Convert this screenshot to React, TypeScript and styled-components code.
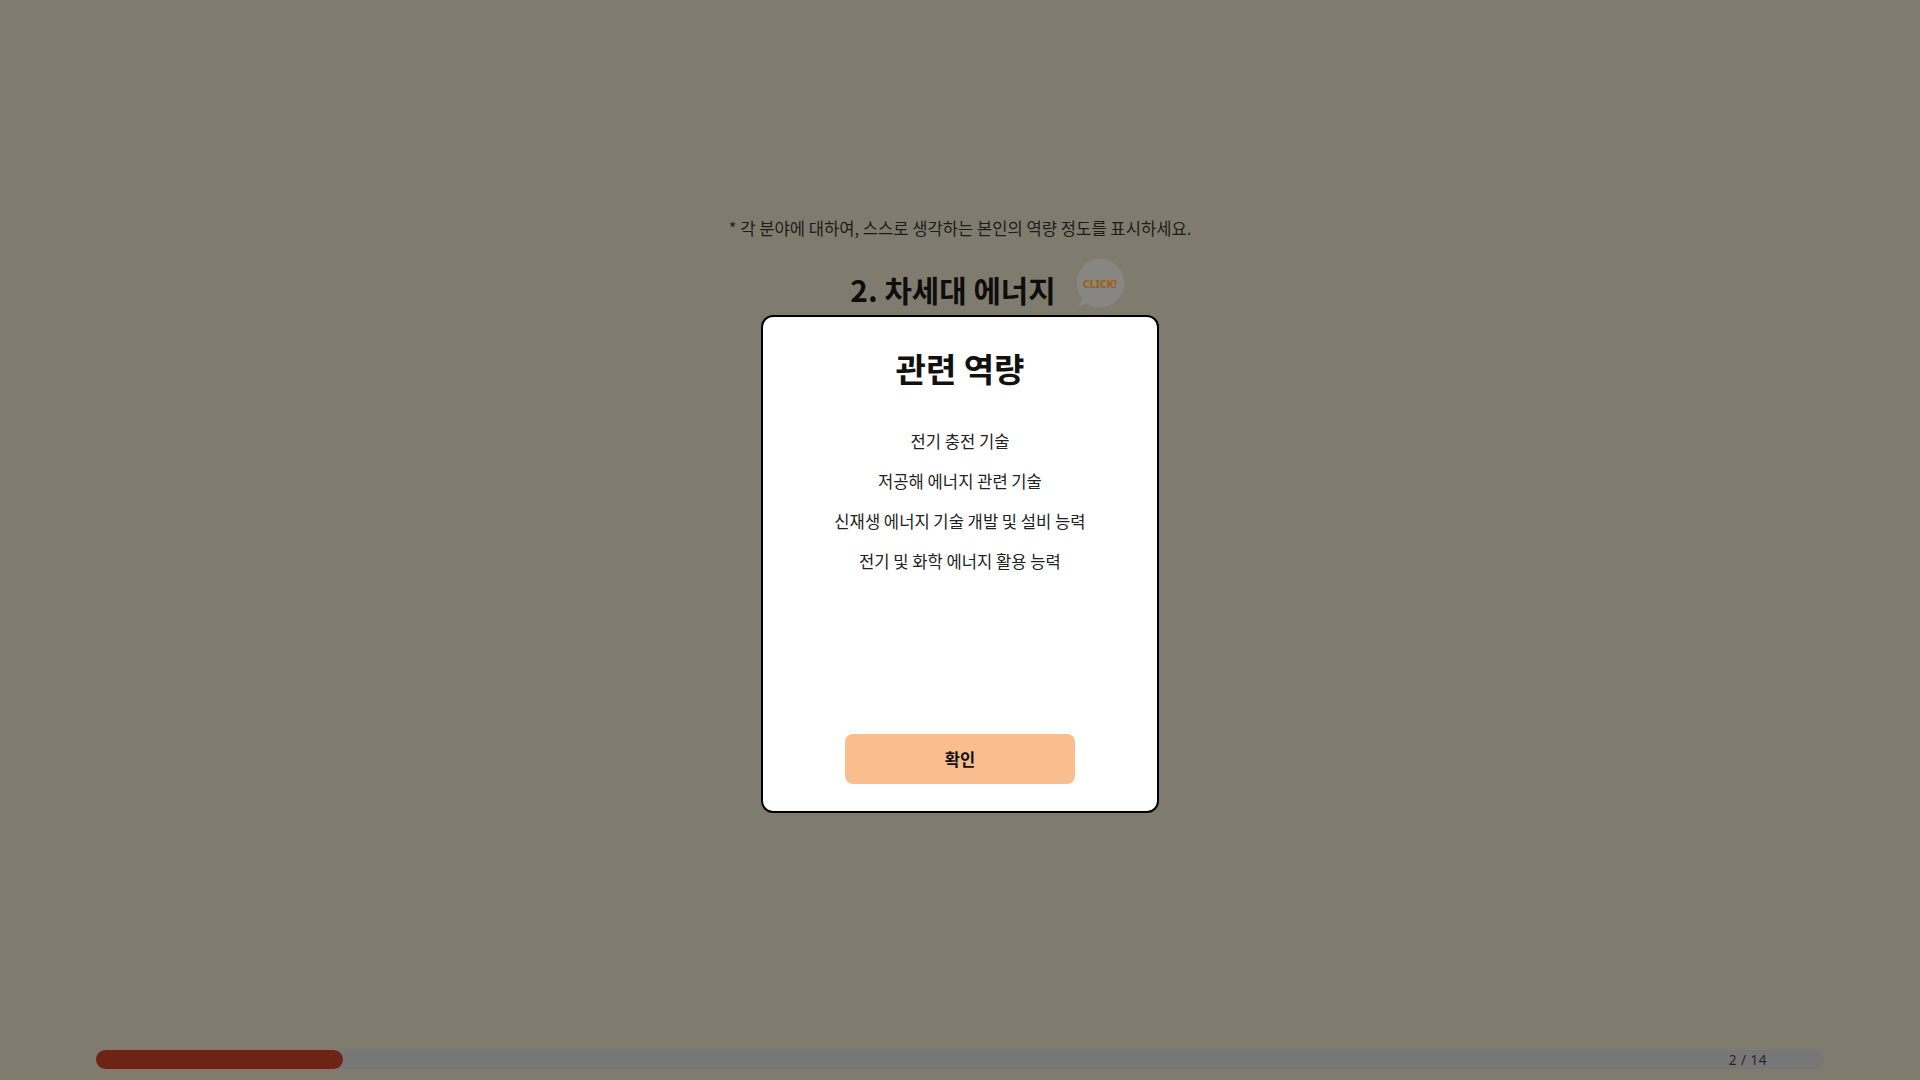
import React from "react";
import styled, { createGlobalStyle } from "styled-components";

const GlobalStyle = createGlobalStyle`
  html, body {
    margin: 0;
    padding: 0;
    background: #7f7b6f;
  }
  body {
    font-family: "Noto Sans CJK KR", "Noto Sans", sans-serif;
  }
  * { box-sizing: border-box; }
`;

const Page = styled.div`
  width: 100%;
  height: 100vh;
  background: #7f7b6f;
  display: flex;
  flex-direction: column;
  align-items: center;
  overflow: hidden;
`;

const Content = styled.main`
  flex: 1;
  display: flex;
  flex-direction: column;
  align-items: center;
  padding-top: 216px;
`;

const Notice = styled.p`
  margin: 0;
  font-size: 16.6px;
  line-height: 24px;
  color: #1d1c19;
`;

const TitleRow = styled.div`
  position: relative;
  margin-top: 30px;
  display: flex;
  justify-content: center;
`;

const Title = styled.h1`
  margin: 0;
  font-size: 29.8px;
  line-height: 40px;
  font-weight: 700;
  color: #0e0d0b;
  transform: translate(-7px, -1px);
`;

const Bubble = styled.div`
  position: absolute;
  left: calc(100% + 11px);
  top: -13px;
  width: 52px;
  height: 52px;
  display: flex;
  align-items: center;
  justify-content: center;
`;

const BubbleShape = styled.svg`
  position: absolute;
  inset: 0;
`;

const BubbleText = styled.span`
  position: relative;
  font-family: "Noto Sans", sans-serif;
  font-size: 11px;
  font-weight: 800;
  color: #9c6117;
  letter-spacing: -0.3px;
`;

const Modal = styled.section`
  margin-top: 5px;
  width: 398px;
  height: 498px;
  background: #ffffff;
  border: 2px solid #000;
  border-radius: 12px;
  display: flex;
  flex-direction: column;
  align-items: center;
  padding: 31px 0 27px;
`;

const ModalTitle = styled.h2`
  margin: 0;
  font-size: 33px;
  line-height: 40px;
  font-weight: 700;
  color: #111;
`;

const List = styled.ul`
  list-style: none;
  margin: 41px 0 0;
  padding: 0;
  display: flex;
  flex-direction: column;
  align-items: center;
  gap: 16px;
`;

const Item = styled.li`
  font-size: 16.6px;
  line-height: 24px;
  color: #222;
`;

const ConfirmButton = styled.button`
  margin-top: auto;
  width: 230px;
  height: 50px;
  border: none;
  border-radius: 8px;
  background: #f9bd8e;
  font-family: "Noto Sans CJK KR", "Noto Sans", sans-serif;
  font-size: 16.5px;
  font-weight: 700;
  color: #111;
  cursor: pointer;
`;

const Footer = styled.footer`
  width: 100%;
  padding: 0 96px 11px;
`;

const Track = styled.div`
  position: relative;
  height: 19px;
  border-radius: 10px;
  background: #777777;
  display: flex;
`;

const Fill = styled.div`
  height: 100%;
  border-radius: 10px;
  background: #6e2414;
`;

const Counter = styled.span`
  position: absolute;
  right: 57px;
  top: 50%;
  transform: translateY(-50%);
  font-family: "Noto Sans", sans-serif;
  font-size: 13.5px;
  color: #262626;
  letter-spacing: 0.5px;
`;

const items = [
  "전기 충전 기술",
  "저공해 에너지 관련 기술",
  "신재생 에너지 기술 개발 및 설비 능력",
  "전기 및 화학 에너지 활용 능력",
];

export default function App() {
  const current = 2;
  const total = 14;
  return (
    <>
      <GlobalStyle />
      <Page>
        <Content>
          <Notice>* 각 분야에 대하여, 스스로 생각하는 본인의 역량 정도를 표시하세요.</Notice>
          <TitleRow>
            <Title>2. 차세대 에너지</Title>
            <Bubble>
              <BubbleShape viewBox="0 0 52 52" width="52" height="52">
                <path
                  d="M26 1.5a24.5 24.5 0 1 1 -13.5 45 L5 49.5 L8.2 41.5 A24.5 24.5 0 0 1 26 1.5z"
                  fill="#878682"
                />
              </BubbleShape>
              <BubbleText>CLICK!</BubbleText>
            </Bubble>
          </TitleRow>
          <Modal>
            <ModalTitle>관련 역량</ModalTitle>
            <List>
              {items.map((t) => (
                <Item key={t}>{t}</Item>
              ))}
            </List>
            <ConfirmButton>확인</ConfirmButton>
          </Modal>
        </Content>
        <Footer>
          <Track>
            <Fill style={{ width: `${(current / total) * 100}%` }} />
            <Counter>
              {current} / {total}
            </Counter>
          </Track>
        </Footer>
      </Page>
    </>
  );
}
